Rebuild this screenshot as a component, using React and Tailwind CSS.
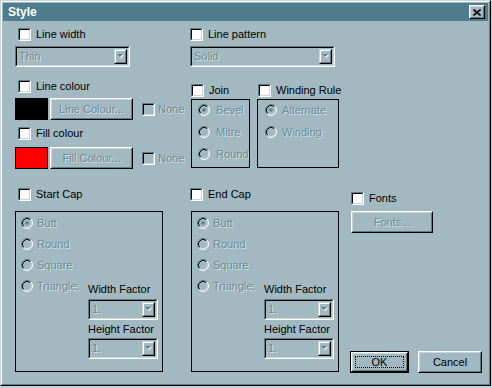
import React from 'react';

const DIS = 'text-[#6b8b96] [text-shadow:1px_1px_0_#d3e0e4]';

const Check = ({ disabled }) => (
  <div className="w-[13px] h-[13px] shrink-0 border border-t-[#5f7c86] border-l-[#5f7c86] border-b-white border-r-white">
    <div
      className={`w-full h-full border border-t-black border-l-black border-b-[#c9d7dc] border-r-[#c9d7dc] ${
        disabled ? 'bg-[#a2b9c1]' : 'bg-white'
      }`}
    />
  </div>
);

const CheckRow = ({ label, disabled, className = '', gap = 'gap-[5px]' }) => (
  <div className={`flex items-center h-[13px] ${gap} ${className}`}>
    <Check disabled={disabled} />
    <span className={`leading-[13px] whitespace-nowrap ${disabled ? DIS : 'text-black'}`}>{label}</span>
  </div>
);

const Radio = ({ on }) => (
  <svg width="12" height="12" viewBox="0 0 12 12" className="shrink-0">
    <circle cx="6" cy="6" r="4.5" fill="#a2b9c1" />
    <path d="M2.11 9.89 A5.5 5.5 0 0 1 9.89 2.11" fill="none" stroke="#5f7c86" strokeWidth="1" />
    <path d="M9.89 2.11 A5.5 5.5 0 0 1 2.11 9.89" fill="none" stroke="#ffffff" strokeWidth="1" />
    <path d="M2.82 9.18 A4.5 4.5 0 0 1 9.18 2.82" fill="none" stroke="#000000" strokeWidth="1" />
    <path d="M9.18 2.82 A4.5 4.5 0 0 1 2.82 9.18" fill="none" stroke="#c9d7dc" strokeWidth="1" />
    {on && <circle cx="6" cy="6" r="1.8" fill="#5f7c86" />}
  </svg>
);

const RadioRow = ({ label, on, gap = 'gap-[4px]' }) => (
  <div className={`flex items-center h-[12px] ${gap}`}>
    <Radio on={on} />
    <span className={`leading-[13px] whitespace-nowrap ${DIS}`}>{label}</span>
  </div>
);

const ArrowBtn = () => (
  <div className="w-[13px] h-full shrink-0 border border-t-[#c9d7dc] border-l-[#c9d7dc] border-b-black border-r-black">
    <div className="w-full h-full border border-t-white border-l-white border-b-[#5f7c86] border-r-[#5f7c86] flex items-center justify-center">
      <svg width="7" height="5" viewBox="0 0 7 5">
        <polygon points="1,1 7,1 4,4" fill="#ffffff" />
        <polygon points="0,0 6,0 3,3" fill="#5f7c86" />
      </svg>
    </div>
  </div>
);

const Combo = ({ w, text }) => (
  <div className={`${w} h-[21px] border border-t-[#5f7c86] border-l-[#5f7c86] border-b-white border-r-white`}>
    <div className="h-full border border-t-black border-l-black border-b-[#c9d7dc] border-r-[#c9d7dc] flex items-stretch p-[1px] pl-[2px]">
      <span className={`flex-1 leading-[15px] ${DIS}`}>{text}</span>
      <ArrowBtn />
    </div>
  </div>
);

const Btn = ({ w, children, disabled, focus }) => {
  const inner = (
    <div className="h-full border border-t-white border-l-white border-b-black border-r-black">
      <div className="h-full border border-t-[#c9d7dc] border-l-[#c9d7dc] border-b-[#5f7c86] border-r-[#5f7c86] flex items-center justify-center p-[2px]">
        <div
          className={`w-full h-full flex items-center justify-center leading-[13px] ${
            focus ? 'border border-dotted border-black' : ''
          } ${disabled ? DIS : 'text-black'}`}
        >
          {children}
        </div>
      </div>
    </div>
  );
  if (focus) return <div className={`${w} h-[22px] border border-black`}>{inner}</div>;
  return <div className={`${w} h-[22px]`}>{inner}</div>;
};

const CapBox = () => (
  <div className="w-[148px] h-[161px] border border-black flex">
    <div className="w-[72px] pl-[5px] pt-[5px] flex flex-col gap-[9px]">
      <RadioRow label="Butt" on />
      <RadioRow label="Round" />
      <RadioRow label="Square" />
      <RadioRow label="Triangle:" />
    </div>
    <div className="flex flex-col">
      <div className="mt-[71px] h-[13px] leading-[13px] text-black whitespace-nowrap">Width Factor</div>
      <div className="mt-[3px]">
        <Combo w="w-[70px]" text="1." />
      </div>
      <div className="mt-[3px] h-[13px] leading-[13px] text-black whitespace-nowrap">Height Factor</div>
      <div className="mt-[2px]">
        <Combo w="w-[70px]" text="1." />
      </div>
    </div>
  </div>
);

export default function App() {
  return (
    <div className="w-[492px] h-[388px] bg-[#c4d3d8] font-['Liberation_Sans',Arial,sans-serif] text-[11px]">
      <div className="w-[491px] h-[386px] border border-t-[#c9d7dc] border-l-[#c9d7dc] border-b-black border-r-black">
        <div className="w-full h-full bg-[#a2b9c1] border border-t-white border-l-white border-b-[#5f7c86] border-r-[#5f7c86]">
          {/* Title bar */}
          <div className="mx-[1px] mt-[1px] h-[18px] bg-[#4e7e8d] flex items-center justify-between pl-[5px] pr-[3px]">
            <span className="text-white font-bold text-[12px] leading-[14px]">Style</span>
            <div className="w-[16px] h-[14px] border border-t-white border-l-white border-b-black border-r-black bg-[#a2b9c1]">
              <div className="w-full h-full border border-t-[#c9d7dc] border-l-[#c9d7dc] border-b-[#5f7c86] border-r-[#5f7c86] flex items-center justify-center">
                <svg width="8" height="7" viewBox="0 0 8 7">
                  <path d="M0.5 0.5 L7.5 6.5 M7.5 0.5 L0.5 6.5" stroke="#000" strokeWidth="1.6" />
                </svg>
              </div>
            </div>
          </div>

          {/* Body */}
          <div className="pl-[13px] pt-[7px]">
            <div className="flex">
              {/* Left column */}
              <div className="w-[175px] flex flex-col">
                <CheckRow label="Line width" className="ml-[3px]" />
                <div className="mt-[5px]">
                  <Combo w="w-[115px]" text="Thin" />
                </div>
                <CheckRow label="Line colour" className="ml-[3px] mt-[13px]" />
                <div className="mt-[5px] flex items-center h-[22px]">
                  <div className="w-[33px] h-[22px] bg-black border border-black" />
                  <div className="ml-[2px]">
                    <Btn w="w-[83px]" disabled>Line Colour...</Btn>
                  </div>
                  <CheckRow label="None" disabled gap="gap-[3px]" className="ml-[9px]" />
                </div>
                <CheckRow label="Fill colour" className="ml-[3px] mt-[7px]" />
                <div className="mt-[7px] flex items-center h-[22px]">
                  <div className="w-[33px] h-[22px] bg-[#ff0000] border border-black" />
                  <div className="ml-[2px]">
                    <Btn w="w-[83px]" disabled>Fill Colour...</Btn>
                  </div>
                  <CheckRow label="None" disabled gap="gap-[3px]" className="ml-[9px]" />
                </div>
              </div>

              {/* Middle column */}
              <div className="flex flex-col">
                <CheckRow label="Line pattern" />
                <div className="mt-[5px]">
                  <Combo w="w-[145px]" text="Solid" />
                </div>
                <div className="mt-[17px] flex gap-[7px] ml-[1px]">
                  <div className="flex flex-col">
                    <CheckRow label="Join" />
                    <div className="mt-[2px] w-[59px] h-[69px] border border-black pl-[6px] pt-[4px] flex flex-col gap-[10px]">
                      <RadioRow label="Bevel" on gap="gap-[6px]" />
                      <RadioRow label="Mitre" gap="gap-[6px]" />
                      <RadioRow label="Round" gap="gap-[6px]" />
                    </div>
                  </div>
                  <div className="flex flex-col">
                    <CheckRow label="Winding Rule" className="ml-[1px]" />
                    <div className="mt-[2px] w-[82px] h-[69px] border border-black pl-[7px] pt-[4px] flex flex-col gap-[10px]">
                      <RadioRow label="Alternate" on gap="gap-[5px]" />
                      <RadioRow label="Winding" gap="gap-[5px]" />
                    </div>
                  </div>
                </div>
              </div>
            </div>

            {/* Bottom section */}
            <div className="flex mt-[19px]">
              <div className="w-[175px] flex flex-col">
                <CheckRow label="Start Cap" className="ml-[3px]" />
                <div className="mt-[10px]">
                  <CapBox />
                </div>
              </div>
              <div className="w-[160px] flex flex-col">
                <CheckRow label="End Cap" />
                <div className="mt-[10px] ml-[1px]">
                  <CapBox />
                </div>
              </div>
              <div className="h-[185px] flex flex-col">
                <CheckRow label="Fonts" className="mt-[4px] ml-[1px]" />
                <div className="mt-[6px] ml-[1px]">
                  <Btn w="w-[82px]" disabled>Fonts...</Btn>
                </div>
                <div className="mt-auto flex gap-[9px]">
                  <Btn w="w-[59px]" focus>OK</Btn>
                  <Btn w="w-[64px]">Cancel</Btn>
                </div>
              </div>
            </div>
          </div>
        </div>
      </div>
    </div>
  );
}
